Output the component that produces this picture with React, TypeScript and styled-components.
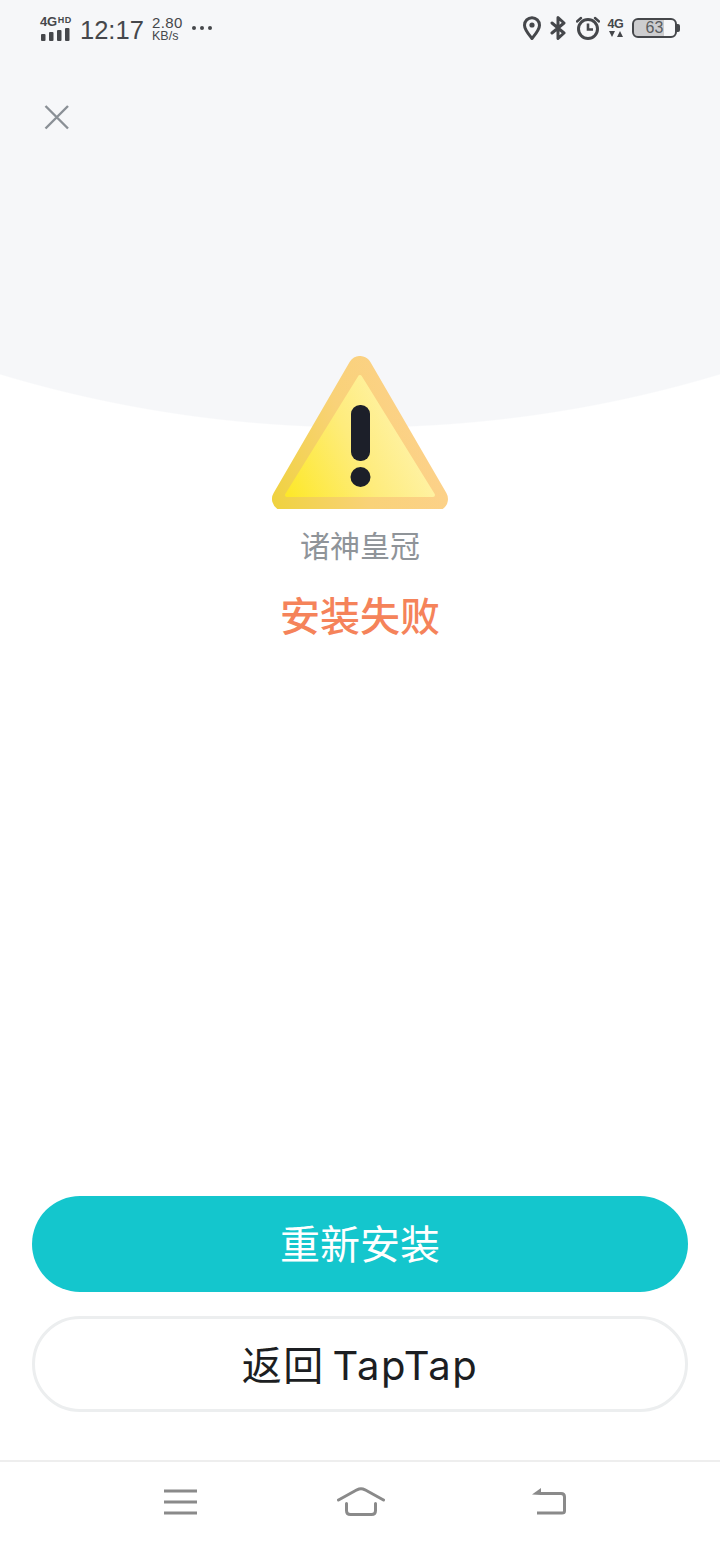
import { createGlobalStyle } from 'styled-components';
import styled from 'styled-components';

const GlobalStyle = createGlobalStyle`
    html, body {
        margin: 0;
        padding: 0;
        background: #fff;
    }
    body {
        font-family: Inter, 'Noto Sans CJK SC', sans-serif;
    }
`;

const Page = styled.div`
    width: 720px;
    height: 1544px;
    display: flex;
    flex-direction: column;
    overflow: hidden;
    background: radial-gradient(circle 1249px at 360px -821px, #f6f7f9 99.9%, #ffffff 100%);
`;

const StatusBar = styled.div`
    height: 56px;
    padding: 0 40px;
    display: flex;
    align-items: center;
    justify-content: space-between;
    color: #45474b;
`;

const StatusGroup = styled.div`
    display: flex;
    align-items: center;
`;

const SignalBox = styled.div`
    width: 31px;
    margin-top: -1px;
    display: flex;
    flex-direction: column;
    gap: 0;
`;

const SignalLabel = styled.div`
    font-family: 'Liberation Sans', sans-serif;
    font-weight: 700;
    font-size: 13px;
    line-height: 12px;
    white-space: nowrap;
    letter-spacing: -0.3px;
    & > small {
        font-size: 9px;
        vertical-align: 3px;
        letter-spacing: 0.4px;
        margin-left: 1px;
    }
`;

const Clock = styled.div`
    margin-left: 9px;
    margin-top: 3px;
    font-family: 'Liberation Sans', sans-serif;
    font-size: 25.5px;
    line-height: 30px;
    width: 63px;
    white-space: nowrap;
`;

const Speed = styled.div`
    margin-left: 9px;
    margin-top: 1px;
    font-family: 'Liberation Sans', sans-serif;
    display: flex;
    flex-direction: column;
    font-size: 12.5px;
    line-height: 12px;
    & > b {
        font-weight: 400;
        font-size: 15px;
        line-height: 14px;
        letter-spacing: 0.4px;
    }
`;

const Dots = styled.div`
    margin-left: 9px;
    display: flex;
    gap: 4px;
`;

const Dot = styled.span`
    width: 4px;
    height: 4px;
    border-radius: 50%;
    background: #45474b;
`;

const SmallNet = styled.div`
    width: 17px;
    margin-left: 7px;
    display: flex;
    flex-direction: column;
    align-items: center;
    font-family: 'Liberation Sans', sans-serif;
    font-weight: 700;
    font-size: 12.5px;
    line-height: 11px;
    letter-spacing: -0.4px;
    & > svg {
        display: block;
        margin-top: 1px;
    }
`;

const Battery = styled.div`
    width: 41px;
    height: 16px;
    margin-left: 8px;
    margin-right: 3px;
    border: 2px solid #45474b;
    border-radius: 6px;
    position: relative;
    display: flex;
    align-items: center;
    justify-content: center;
    font-family: 'Liberation Sans', sans-serif;
    font-size: 16px;
    color: #5a5c60;
    background: linear-gradient(90deg, #cdcdcf 73%, #f6f7f9 73%);
    background-clip: padding-box;
    &::after {
        content: '';
        position: absolute;
        right: -5px;
        top: 4px;
        width: 3px;
        height: 8px;
        border-radius: 0 2px 2px 0;
        background: #45474b;
    }
`;

const CloseRow = styled.div`
    height: 50px;
    margin-top: 36px;
    padding-left: 32px;
    display: flex;
    align-items: center;
`;

const Content = styled.div`
    flex: 1;
    padding-top: 214px;
    display: flex;
    flex-direction: column;
    align-items: center;
`;

const WarningIcon = styled.svg`
    display: block;
    width: 176px;
    height: 153px;
`;

const AppName = styled.div`
    margin-top: 15px;
    font-size: 30px;
    line-height: 44px;
    color: #8f9499;
`;

const StatusTitle = styled.div`
    margin-top: 25px;
    font-size: 40px;
    font-weight: 500;
    line-height: 48px;
    color: #f5835a;
`;

const Actions = styled.div`
    padding: 0 32px;
    display: flex;
    flex-direction: column;
    gap: 24px;
`;

const ActionButton = styled.button<{ $primary?: boolean }>`
    height: 96px;
    border-radius: 48px;
    box-sizing: border-box;
    border: ${(p) => (p.$primary ? 'none' : '3px solid #eceeef')};
    background: ${(p) => (p.$primary ? '#14c6cd' : '#ffffff')};
    color: ${(p) => (p.$primary ? '#ffffff' : '#1c1e22')};
    font-family: Inter, 'Noto Sans CJK SC', sans-serif;
    font-size: 40px;
    letter-spacing: ${(p) => (p.$primary ? 0 : '1.5px')};
    word-spacing: ${(p) => (p.$primary ? 0 : '-5px')};
    padding: 0 0 ${(p) => (p.$primary ? '4px' : '2px')};
`;

const NavBar = styled.div`
    margin-top: 48px;
    height: 82px;
    border-top: 2px solid #eeeeee;
    padding-left: 163px;
    display: flex;
    align-items: flex-start;
    gap: 140px;
`;

const NavIcon = styled.svg`
    display: block;
    margin-top: 25px;
    fill: none;
    stroke: #8a8a8a;
    stroke-width: 3;
`;

const BackIcon = styled(NavIcon)`
    margin-left: 6px;
`;

const App = () => {
    return (
        <>
            <GlobalStyle />
            <Page>
                <StatusBar>
                    <StatusGroup>
                        <SignalBox>
                            <SignalLabel>
                                4G<small>HD</small>
                            </SignalLabel>
                            <svg width="31" height="13" viewBox="0 0 31 13" fill="#45474b">
                                <rect x="1" y="6" width="4.5" height="7" rx="1" />
                                <rect x="9" y="4" width="4.5" height="9" rx="1" />
                                <rect x="17" y="2" width="4.5" height="11" rx="1" />
                                <rect x="25" y="0" width="4.5" height="13" rx="1" />
                            </svg>
                        </SignalBox>
                        <Clock>12:17</Clock>
                        <Speed>
                            <b>2.80</b>
                            KB/s
                        </Speed>
                        <Dots>
                            <Dot />
                            <Dot />
                            <Dot />
                        </Dots>
                    </StatusGroup>
                    <StatusGroup>
                        <svg width="18" height="24" viewBox="0 0 18 24" fill="none" stroke="#45474b" strokeWidth="3">
                            <path d="M9 22.5 C5 17.5 1.5 13.5 1.5 9.2 A7.5 7.5 0 0 1 16.5 9.2 C16.5 13.5 13 17.5 9 22.5 Z" strokeLinejoin="round" />
                            <circle cx="9" cy="9" r="2.6" fill="#45474b" stroke="none" />
                        </svg>
                        <svg width="16" height="24" viewBox="0 0 16 24" fill="none" stroke="#45474b" strokeWidth="3" strokeLinecap="round" strokeLinejoin="round" style={{ marginLeft: 9 }}>
                            <path d="M2 7 L14 17 L8 22.5 V1.5 L14 7 L2 17" />
                        </svg>
                        <svg width="24" height="24" viewBox="0 0 24 24" fill="none" stroke="#45474b" style={{ marginLeft: 10 }}>
                            <circle cx="12" cy="13" r="9.5" strokeWidth="3" />
                            <path d="M12 7.5 V13.5 H17" strokeWidth="2.6" />
                            <path d="M1 5.5 L5 2 M23 5.5 L19 2" strokeWidth="2.4" strokeLinecap="round" />
                        </svg>
                        <SmallNet>
                            4G
                            <svg width="16" height="7" viewBox="0 0 16 7" fill="#45474b">
                                <path d="M1 0 H7 L4 6 Z M9 6 H15 L12 0 Z" />
                            </svg>
                        </SmallNet>
                        <Battery>63</Battery>
                    </StatusGroup>
                </StatusBar>
                <CloseRow>
                    <svg width="50" height="50" viewBox="0 0 50 50" stroke="#8a9096" strokeWidth="2.4" fill="none">
                        <path d="M13.5 14 L36 36.5 M36 14 L13.5 36.5" />
                    </svg>
                </CloseRow>
                <Content>
                    <WarningIcon viewBox="0 0 176 153">
                        <defs>
                            <linearGradient id="outer" gradientUnits="userSpaceOnUse" x1="0" y1="150" x2="176" y2="90">
                                <stop offset="0" stopColor="#efd23e" />
                                <stop offset="0.5" stopColor="#f9d278" />
                                <stop offset="1" stopColor="#fdd18d" />
                            </linearGradient>
                            <linearGradient id="inner" gradientUnits="userSpaceOnUse" x1="16" y1="140" x2="160" y2="70">
                                <stop offset="0" stopColor="#fde82a" />
                                <stop offset="0.5" stopColor="#feec7c" />
                                <stop offset="1" stopColor="#fff4b4" />
                            </linearGradient>
                        </defs>
                        <polygon points="88,12 12,143 164,143" fill="url(#outer)" stroke="url(#outer)" strokeWidth="24" strokeLinejoin="round" />
                        <polygon points="88,21 15,139 161,139" fill="url(#inner)" stroke="url(#inner)" strokeWidth="4" strokeLinejoin="round" />
                        <rect x="79" y="49" width="19" height="56" rx="9" fill="#1c1f29" />
                        <circle cx="88.5" cy="121" r="10" fill="#1c1f29" />
                    </WarningIcon>
                    <AppName>诸神皇冠</AppName>
                    <StatusTitle>安装失败</StatusTitle>
                </Content>
                <Actions>
                    <ActionButton $primary>重新安装</ActionButton>
                    <ActionButton>返回 TapTap</ActionButton>
                </Actions>
                <NavBar>
                    <NavIcon width="34" height="30" viewBox="0 0 34 30">
                        <path d="M1 4 H34 M1 15 H34 M1 26 H34" />
                    </NavIcon>
                    <NavIcon width="48" height="32" viewBox="0 0 48 32" strokeLinecap="round" strokeLinejoin="round">
                        <path d="M1.5 13 L20 2.8 Q24 0.8 28 2.8 L46.5 13" />
                        <path d="M9.5 16.5 V23.5 Q9.5 27.5 13.5 27.5 H34.5 Q38.5 27.5 38.5 23.5 V16.5" />
                    </NavIcon>
                    <BackIcon width="36" height="30" viewBox="0 0 36 30">
                        <path d="M9 6.5 H30 Q33.5 6.5 33.5 10 V24 Q33.5 26 31 26 H6" />
                        <path d="M1 7.5 L10 1 V8 Z" fill="#8a8a8a" stroke="none" />
                    </BackIcon>
                </NavBar>
            </Page>
        </>
    );
};

export default App;
